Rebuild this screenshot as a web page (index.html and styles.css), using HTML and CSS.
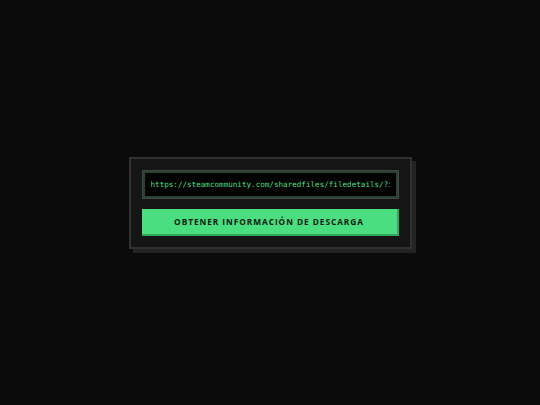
FILE: index.html
```html
<!DOCTYPE html>
<html lang="es">
<head>
    <meta charset="UTF-8">
    <meta name="viewport" content="width=device-width, initial-scale=1.0">
    <title>Steam Workshop Downloader</title>
    <link rel="stylesheet" href="styles.css">
</head>
<body>
    <div class="panel">
        <input class="url-input" type="text" value="https://steamcommunity.com/sharedfiles/filedetails/?id=" spellcheck="false">
        <button class="fetch-btn">Obtener información de descarga</button>
    </div>
</body>
</html>
```
FILE: styles.css
```css
html, body {
    height: 100%;
}
body {
    margin: 0;
    background: #0b0b0b;
    display: flex;
    align-items: center;
    justify-content: center;
}
.panel {
    width: 257px;
    padding: 11px;
    background: #151515;
    border: 2px solid #313131;
    box-shadow: 4px 4px 0 #232323;
    display: flex;
    flex-direction: column;
    gap: 10px;
}
.url-input {
    box-sizing: border-box;
    width: 100%;
    height: 29px;
    margin: 0;
    padding: 0 6px;
    background: #030303;
    border: 3px solid #2c4034;
    outline: 1px solid #3a4a40;
    outline-offset: -1px;
    color: #4ade80;
    font-family: "DejaVu Sans Mono", monospace;
    font-size: 7.6px;
}
.fetch-btn {
    box-sizing: border-box;
    width: 100%;
    height: 27px;
    margin: 0;
    background: #4ade80;
    border: none;
    border-right: 2px solid #30a85e;
    border-bottom: 2px solid #30a85e;
    color: #0c1a10;
    font-family: "Open Sans", sans-serif;
    font-weight: 700;
    font-size: 8.3px;
    letter-spacing: 0.95px;
    text-transform: uppercase;
}
```
